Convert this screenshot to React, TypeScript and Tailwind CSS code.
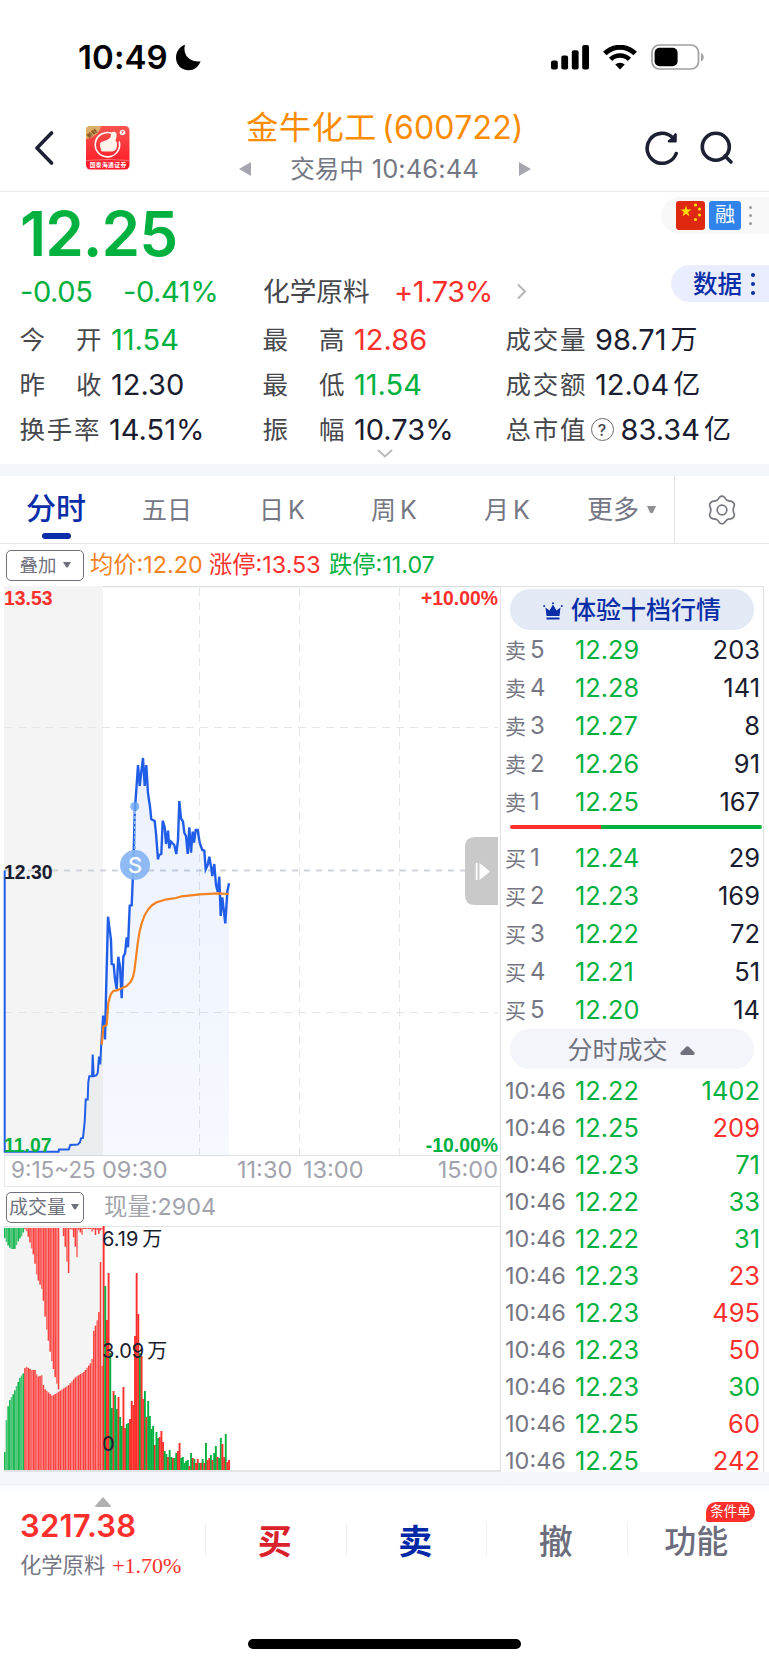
import { clsx } from 'clsx';
import type { ReactNode } from 'react';

type Tone = 'up' | 'down' | 'flat';

interface Stat {
  label: string;
  value: string;
  tone: Tone;
  hint?: boolean;
}

interface Level {
  label: string;
  price: string;
  qty: string;
}

interface Tick {
  price: string;
  qty: string;
  tone: Tone;
}

const RED = '#fb302d';
const GREEN = '#00b140';

const TONE: Record<Tone, string> = {
  up: 'text-[#fb302d]',
  down: 'text-[#00b140]',
  flat: 'text-[#1a1c30]',
};

const STATS: Stat[][] = [
  [
    { label: '今开', value: '11.54', tone: 'down' },
    { label: '最高', value: '12.86', tone: 'up' },
    { label: '成交量', value: '98.71万', tone: 'flat' },
  ],
  [
    { label: '昨收', value: '12.30', tone: 'flat' },
    { label: '最低', value: '11.54', tone: 'down' },
    { label: '成交额', value: '12.04亿', tone: 'flat' },
  ],
  [
    { label: '换手率', value: '14.51%', tone: 'flat' },
    { label: '振幅', value: '10.73%', tone: 'flat' },
    { label: '总市值', value: '83.34亿', tone: 'flat', hint: true },
  ],
];

const SELLS: Level[] = [
  { label: '5', price: '12.29', qty: '203' },
  { label: '4', price: '12.28', qty: '141' },
  { label: '3', price: '12.27', qty: '8' },
  { label: '2', price: '12.26', qty: '91' },
  { label: '1', price: '12.25', qty: '167' },
];

const BUYS: Level[] = [
  { label: '1', price: '12.24', qty: '29' },
  { label: '2', price: '12.23', qty: '169' },
  { label: '3', price: '12.22', qty: '72' },
  { label: '4', price: '12.21', qty: '51' },
  { label: '5', price: '12.20', qty: '14' },
];

const TICKS: Tick[] = [
  { price: '12.22', qty: '1402', tone: 'down' },
  { price: '12.25', qty: '209', tone: 'up' },
  { price: '12.23', qty: '71', tone: 'down' },
  { price: '12.22', qty: '33', tone: 'down' },
  { price: '12.22', qty: '31', tone: 'down' },
  { price: '12.23', qty: '23', tone: 'up' },
  { price: '12.23', qty: '495', tone: 'up' },
  { price: '12.23', qty: '50', tone: 'up' },
  { price: '12.23', qty: '30', tone: 'down' },
  { price: '12.25', qty: '60', tone: 'up' },
  { price: '12.25', qty: '242', tone: 'up' },
];

// Chart space: x 0..501, y 586..1156 for price, y 1226..1472 for volume
const AUCTION_LINE =
  '4.7,870.6 4.7,1151.8 58.7,1151.8 59,1149.4 68.7,1149.4 70.3,1145 77.7,1144.6 80,1142.3 81,1138.3 83,1137.9 84.7,1121.7 85.7,1099.6 87.7,1099.6 88.3,1082.2 89.3,1076.2 92,1076.2 92.7,1054.5 93.7,1076.2 96.3,1075.5 97.7,1073 99,1056.5 100.3,1064.4 101.3,1042.6 103,1015.7';

const TRADE_LINE =
  '103,1015.7 105,1039.5 106,995 108,916.7 111,940 111.7,964 113.7,964.7 115,979.3 116.7,989.3 118.3,956.7 120,966.7 121.7,998.3 123.3,956.7 125,953.3 126.7,937.3 128,947.3 129.7,905.7 131.7,905.3 133.3,866.7 134.7,813.3 138,765 139.7,786 141.3,771.7 143,758 144.7,786 146.3,765 148,793.3 150,806.7 151.3,819.3 154.7,821 156,833.3 158,859.3 159,855 161.3,854 162.7,820.7 164.7,827.3 166,844 168,830.7 169.3,848.3 171,841.7 174.3,845 176.3,854 178,840 179.3,801 181,818.3 183,821.7 184.3,832.7 186,836 187.7,854 189.3,827.3 191,852.7 192.7,831.7 194,842.7 195.7,830 197.7,830 199.7,842.7 202.3,850 204.3,850.7 205.7,869.3 207.7,865 209.3,856.7 211.3,868.3 212.3,876 214.3,864 216,885 217.7,891.7 219.3,876.7 220.7,916 222.3,897.3 225.3,923.3 227.3,891.7 229,883.3';

const AVG_LINE =
  '101.7,1044.6 103.3,1026.8 106.7,1024.8 108.3,1003 110.7,994.4 113.3,991 116.7,990.4 121.7,988.3 126.7,986 130.7,981.7 133,977 134.3,971 135.3,963.3 137.7,943.3 139.5,932 141.7,923.3 144.5,915.5 148.3,909.3 152,905.2 156.7,902.3 166.7,899.3 176,898 181.7,896.3 200,894.3 218.3,893.3 228.7,894';

// Height and colour of each minute's volume bar
const VOLUME =
  'r244 g184 r150 r197 g117 g62 r79 g75 g61 r73 g53 g44 r83 r42 g46 g47 r51 r69 r65 r134 r197 r156 g117 r114 r71 g79 r53 g69 g54 g41 g44 r25 g38 g32 r33 r39 r28 g19 g16 r13 g20 g13 r12 g12 g17 r19 r27 g12 g13 g7 g9 g10 r4 g17 r12 g11 r7 r11 g7 r7 g11 r7 g27 r10 r12 g15 r10 g17 g24 r13 g12 g32 r26 r13 g36 r8 r10'
    .split(' ')
    .map((s) => ({ up: s[0] === 'r', h: Number(s.slice(1)) }));

// Call auction: matched volume grows up from the base, unmatched hangs from the top
const MATCHED = [
  [4, 18], [5, 43], [6.5, 58], [8, 68], [13, 77], [19, 92], [23.5, 98], [24.5, 104], [31, 100],
  [35, 100], [36.5, 93], [41.5, 95], [43, 82], [51.5, 74], [59, 79], [68, 85], [75, 93], [83, 98],
  [90, 107], [92, 113], [92.7, 138], [96.5, 150], [98.5, 160], [99.3, 163], [99.6, 208], [101, 208],
  [101.2, 104], [103, 104],
];

const UNMATCHED = [
  [4, 10], [7, 17], [10, 21], [14, 21], [18, 12], [21, 8], [24, 1], [25.5, 2], [28.5, 12], [33, 28],
  [36.5, 50], [41.5, 62], [45, 95], [50, 128], [55, 152], [58.5, 164], [59, 0], [61.5, 0], [65, 22],
  [67, 42], [68.7, 48], [69, 1], [71, 1], [73.5, 12], [77, 34], [77.5, 1], [80, 5], [81, 9], [82, 1],
  [90, 1], [91, 5], [92, 1], [94, 2], [95, 9], [96, 1], [98, 6], [100, 2], [102, 1],
];

function sample(profile: number[][], x: number) {
  for (let i = 1; i < profile.length; i++) {
    const [x0, y0] = profile[i - 1];
    const [x1, y1] = profile[i];
    if (x <= x1) return y0 + ((y1 - y0) * (x - x0)) / (x1 - x0);
  }
  return 0;
}

const AUCTION_X = Array.from({ length: 59 }, (_, i) => 4 + i * 1.68);

function StatusBar() {
  return (
    <div className="flex h-[105px] items-center pt-[9px] pr-[64px] pl-[78px]">
      <span className="text-[33px] leading-none font-semibold tracking-[0.1px] text-black">10:49</span>
      <svg className="ml-[7px]" width="27" height="27" viewBox="0 0 27 27">
        <path d="M10 .8C7.5 9 13 19 25.6 17.2C23.5 23 19 26.2 13.6 26.2C6.5 26.2 1 20.7 1 13.7C1 8 4.6 2.6 10 .8Z" />
      </svg>
      <svg className="ml-auto" width="38" height="25" viewBox="0 0 38 25">
        <rect y="15.5" width="6.8" height="9" rx="2" />
        <rect x="10.3" y="10.5" width="6.8" height="14" rx="2" />
        <rect x="20.8" y="5.3" width="6.8" height="19.2" rx="2" />
        <rect x="31.2" y="0" width="6.8" height="24.5" rx="2" />
      </svg>
      <svg className="ml-[14px]" width="34" height="25" viewBox="0 0 34 25" fill="none" stroke="#000">
        <path d="M1.8 8.6A21.5 21.5 0 0 1 32.2 8.6" strokeWidth="5" />
        <path d="M7.6 14.3A13.4 13.4 0 0 1 26.4 14.3" strokeWidth="4.6" />
        <path d="M17 24.5L12.2 19.6A7 7 0 0 1 21.8 19.6Z" fill="#000" stroke="none" />
      </svg>
      <svg className="ml-[14px]" width="54" height="26" viewBox="0 0 54 26">
        <rect x="1" y="1" width="46.5" height="24" rx="7.5" fill="none" stroke="#a0a0a0" strokeWidth="1.7" />
        <rect x="3.6" y="3.7" width="23" height="18.6" rx="5" />
        <path d="M50 9V17.5C53.6 16 53.6 10.5 50 9Z" fill="#a0a0a0" />
      </svg>
    </div>
  );
}

function BrokerLogo() {
  return (
    <svg className="ml-[32px]" width="44" height="44" viewBox="0 0 44 44">
      <defs>
        <linearGradient id="broker" x1="0" y1="0" x2="0" y2="1">
          <stop offset="0" stopColor="#f9534c" />
          <stop offset="1" stopColor="#fd1424" />
        </linearGradient>
        <clipPath id="brokerClip">
          <rect width="43.5" height="43.5" rx="4.5" />
        </clipPath>
      </defs>
      <g clipPath="url(#brokerClip)">
        <rect width="44" height="44" fill="url(#broker)" />
        <path d="M0 0H15C14 7 7 12 0 13Z" fill="#dcae68" />
        <text x="1" y="11" fontSize="5.5" fontWeight="700" fill="#7a4a18" transform="rotate(-38 4 9)">
          新财
        </text>
        <path d="M26 7.4A12.2 12.2 0 1 0 33.2 15.5" fill="none" stroke="#fff" strokeWidth="1.6" />
        <path
          d="M15 16C18 15.500 23 13.500 24.500 11C25.300 9 24.500 6.500 27 5.800C30.500 5.300 31 8 30.500 11L29.500 14.500C31 16 31.500 18 30.800 20C31 23 29 25.500 25.500 25.500H16.500C15 25.500 14.500 24 14.800 22.500C13.600 20.500 13.700 17.500 15 16Z"
          fill="#fff3ec"
        />
        <circle cx="36.5" cy="6.5" r="2.8" fill="#fff" />
        <path d="M35.5 8L37.5 5M35.5 5.5H37.5" stroke="#f9453f" strokeWidth=".8" />
        <path d="M0 34.5Q22 32.5 44 34.5" fill="none" stroke="#ff8d85" strokeWidth=".8" />
        <text x="3.7" y="40.7" fontSize="5.8" fontWeight="700" fill="#fff" textLength="36.5">
          国泰海通证券
        </text>
      </g>
    </svg>
  );
}

function Header() {
  return (
    <div className="flex h-[87px] items-center border-b border-[#ededed] pr-[35px] pl-[34px]">
      <svg width="20" height="34" viewBox="0 0 20 34" fill="none" stroke="#1d2033" strokeWidth="3.6">
        <path d="M17.5 2L3 17L17.5 32" strokeLinecap="round" strokeLinejoin="round" />
      </svg>
      <BrokerLogo />
      <div className="flex flex-1 flex-col items-center pr-[5px] pb-1">
        <div className="flex h-[46px] items-center gap-[5px] text-[#fb8c00]">
          <span className="text-[32px] leading-none tracking-[0.7px]">金牛化工</span>
          <span className="text-[32px] leading-none tracking-[0.2px]">(600722)</span>
        </div>
        <div className="flex h-[36px] items-center text-[24.5px] leading-none text-[#757784]">
          <svg width="12" height="14" viewBox="0 0 12 14" fill="#a5a6b0">
            <path d="M12 0V14L0 7Z" />
          </svg>
          <span className="ml-[39px]">交易中</span>
          <span className="ml-[8px] text-[25.5px] tracking-[0.1px]">10:46:44</span>
          <svg className="ml-[40px]" width="12" height="14" viewBox="0 0 12 14" fill="#a5a6b0">
            <path d="M0 0V14L12 7Z" />
          </svg>
        </div>
      </div>
      <svg width="34" height="34" viewBox="0 0 34 34" fill="none" stroke="#1d2033" strokeWidth="3.6">
        <path d="M31.2 22.5A15 15 0 1 1 27.5 6.5" strokeLinecap="round" />
        <path d="M30.5 3.5V10.2H24L27 8Z" fill="#1d2033" strokeWidth="2.6" strokeLinejoin="round" />
      </svg>
      <svg className="ml-[21px]" width="34" height="34" viewBox="0 0 34 34" fill="none" stroke="#1d2033" strokeWidth="3.6">
        <circle cx="15.8" cy="15.8" r="13.5" />
        <path d="M25 25L31 31" strokeLinecap="round" />
      </svg>
    </div>
  );
}

function StatCell({ stat }: { stat: Stat }) {
  return (
    <div className="flex h-[45px] items-center leading-none">
      <span
        className={clsx(
          'flex justify-between text-[25.5px] text-[#47484d]',
          stat.label.length === 2 ? 'w-[82px]' : 'w-[80px]',
        )}
      >
        {stat.label.split('').map((ch) => (
          <span key={ch}>{ch}</span>
        ))}
      </span>
      {stat.hint && (
        <span className="ml-[5px] flex size-[23px] items-center justify-center rounded-full border-[1.5px] border-[#6a6b70] text-[16px] font-medium text-[#47484d]">
          ?
        </span>
      )}
      <span
        className={clsx(
          'flex items-center text-[29px] whitespace-nowrap',
          TONE[stat.tone],
          stat.hint ? 'ml-[7px]' : 'ml-[9.5px]',
        )}
      >
        {stat.value.replace(/[万亿]/, '')}
        <span className="ml-[4px] text-[27px]">{stat.value.match(/[万亿]/)?.[0]}</span>
      </span>
    </div>
  );
}

function Quote() {
  return (
    <div className="relative h-[272px]">
      <div className="flex h-[84px] items-center pl-[20px] text-[62px] leading-none font-semibold tracking-[-1px] text-[#00b140]">
        12.25
      </div>
      <div className="flex h-[30px] items-center pl-[20px] text-[29px] leading-none tracking-[-0.4px]">
        <span className="w-[103px] text-[#00b140]">-0.05</span>
        <span className="w-[140px] text-[#00b140]">-0.41%</span>
        <span className="w-[131px] text-[26.7px] tracking-normal text-[#47484d]">化学原料</span>
        <span className="w-[123px] text-[#fb302d]">+1.73%</span>
        <svg width="10" height="17" viewBox="0 0 10 17" fill="none" stroke="#b5b5b5" strokeWidth="2">
          <path d="M1 1.5L8 8.5L1 15.5" />
        </svg>
      </div>
      <div className="grid grid-cols-[243px_243px_1fr] pt-[11px] pl-[19.5px]">
        {STATS.flat().map((stat) => (
          <StatCell key={stat.label} stat={stat} />
        ))}
      </div>
      <svg className="mx-auto -mt-[3px]" width="16" height="9" viewBox="0 0 16 9" fill="none" stroke="#b9b9b9" strokeWidth="2">
        <path d="M1 1L8 7.5L15 1" />
      </svg>

      <div className="absolute top-[5px] right-0 flex h-[37px] w-[108px] items-center rounded-l-full bg-[#f8f8f8] pb-px pl-[15px]">
        <svg width="29" height="29" viewBox="0 0 29 29">
          <rect width="29" height="29" rx="3" fill="#de2910" />
          <path d="M10 4.5L11.3 8.6H15.5L12.1 11.1L13.4 15.2L10 12.7L6.6 15.2L7.9 11.1L4.5 8.6H8.7Z" fill="#ffde00" />
          <g fill="#ffde00">
            <circle cx="19.5" cy="4" r="1.6" />
            <circle cx="23.5" cy="8" r="1.6" />
            <circle cx="23.5" cy="14" r="1.6" />
            <circle cx="19.5" cy="18.5" r="1.6" />
          </g>
        </svg>
        <span className="ml-[4px] flex h-[29px] w-[32px] items-center justify-center rounded-[3px] bg-[#3083ea] text-[20px] text-white">
          融
        </span>
        <span className="ml-[8px] flex flex-col gap-[5px]">
          <i className="size-[3px] rounded-full bg-[#999]" />
          <i className="size-[3px] rounded-full bg-[#999]" />
          <i className="size-[3px] rounded-full bg-[#999]" />
        </span>
      </div>
      <div className="absolute top-[73px] right-0 flex h-[37px] w-[98px] items-center rounded-l-full bg-[#e9edfd] pt-[2px] pl-[22px] text-[24.5px] leading-none font-medium text-[#0a2ea8]">
        数据
        <span className="mb-[2px] ml-[9px] flex flex-col gap-[5px]">
          <i className="size-[4px] rounded-full bg-[#0a2ea8]" />
          <i className="size-[4px] rounded-full bg-[#0a2ea8]" />
          <i className="size-[4px] rounded-full bg-[#0a2ea8]" />
        </span>
      </div>
    </div>
  );
}

function Tabs() {
  return (
    <div className="flex h-[68px] items-center border-b border-[#e3e3e5] text-[25px] leading-none text-[#757784]">
      <div className="flex h-full w-[117px] flex-col items-center pt-[17px] pr-[5px]">
        <span className="text-[30px] font-medium text-[#0a2ea8]">分时</span>
        <span className="mt-[10px] h-[6px] w-[29px] rounded-full bg-[#0a2ea8]" />
      </div>
      <span className="w-[100px] pt-px text-center">五日</span>
      <span className="w-[130px] pt-px text-center">日<span className="ml-[4px]">K</span></span>
      <span className="w-[94px] pt-px text-center">周<span className="ml-[4px]">K</span></span>
      <span className="w-[132px] pt-px text-center">月<span className="ml-[4px]">K</span></span>
      <span className="ml-[14px] w-[60px] pt-px text-[26px]">更多</span>
      <svg width="9" height="8" viewBox="0 0 9 8" fill="#8f8f94">
        <path d="M0 0H9L6 6.5Q4.5 8 3 6.5Z" />
      </svg>
      <div className="ml-auto flex h-full w-[95px] items-center justify-center border-l border-[#e3e3e5]">
        <svg width="30" height="30" viewBox="0 0 30 30" fill="none" stroke="#76787f" strokeWidth="1.7">
          <path
            d="M12.4 2.3Q15 -.1 17.600 2.300C19 5.200 20.500 6.200 23.800 6.100Q27.400 7.200 27.400 10.600C25.800 13.500 25.800 16.500 27.400 19.400Q27.400 22.800 23.800 23.900C20.500 23.800 19 24.800 17.600 27.700Q15 30.100 12.400 27.700C11 24.800 9.500 23.800 6.200 23.900Q2.600 22.800 2.600 19.400C4.200 16.500 4.200 13.500 2.600 10.600Q2.600 7.200 6.200 6.100C9.500 6.200 11 5.200 12.400 2.300Z"
            strokeLinejoin="round"
          />
          <circle cx="15" cy="15" r="4.8" />
        </svg>
      </div>
    </div>
  );
}

function Dropdown({ children, className }: { children: ReactNode; className?: string }) {
  return (
    <span
      className={clsx(
        'ml-[6px] flex h-[31px] w-[78px] items-center justify-center rounded-[5px] border-[1.5px] border-[#6f717d] text-[#6f717d]',
        className,
      )}
    >
      {children}
      <svg width="8" height="6" viewBox="0 0 8 6" fill="currentColor">
        <path d="M0 0H8L5 5Q4 6 3 5Z" />
      </svg>
    </span>
  );
}

function PriceChart() {
  return (
    <svg className="block" width="501" height="570" viewBox="0 586 501 570">
      <defs>
        <linearGradient id="area" x1="0" y1="0" x2="0" y2="1">
          <stop offset="0" stopColor="#2563eb" stopOpacity=".09" />
          <stop offset="1" stopColor="#2563eb" stopOpacity=".04" />
        </linearGradient>
      </defs>
      <rect x="4" y="586" width="99" height="570" fill="#f4f4f4" />
      <path d="M103 586.5H500" stroke="#dadde0" strokeWidth="1.5" />
      <path d="M4 1155.5H500" stroke="#dfe1e5" />
      <g stroke="#e3e5e9" strokeDasharray="8 6">
        <path d="M199.5 588V1156M299.5 588V1156M399.5 588V1156" />
        <path d="M4 727.5H498M4 1012.5H498" />
      </g>
      <path d="M4 870.5H498" stroke="#cfd4da" strokeWidth="2" strokeDasharray="6 6" />

      <polygon points={`${TRADE_LINE} 229,1156 103,1156`} fill="url(#area)" />
      <polygon points={`${AUCTION_LINE} 103,1156 4.7,1156`} fill="#33408a" fillOpacity=".04" />
      <polyline points={AUCTION_LINE} fill="none" stroke="#215ee8" strokeWidth="2" />
      <polyline points={TRADE_LINE} fill="none" stroke="#215ee8" strokeWidth="2.4" />
      <polyline points={AVG_LINE} fill="none" stroke="#f58220" strokeWidth="2.2" strokeLinejoin="round" />

      {/* sell marker */}
      <path d="M135 811V850" stroke="#8ab6f2" strokeWidth="2" strokeDasharray="3 2" />
      <circle cx="134.7" cy="806.5" r="4.5" fill="#6aa6f3" fillOpacity=".8" />
      <circle cx="135" cy="865" r="15" fill="#85b4f3" fillOpacity=".92" />
      <text x="135" y="873" textAnchor="middle" fontSize="22" fontWeight="500" fill="#fff">
        S
      </text>

      <g fontFamily="'Liberation Sans', Arial, sans-serif" fontSize="19.4" fontWeight="700">
        <text x="4" y="605" fill={RED}>13.53</text>
        <text x="4" y="878.5" fill="#1a1c30">12.30</text>
        <text x="4" y="1152" fill={GREEN}>11.07</text>
        <text x="498" y="605" textAnchor="end" fill={RED}>+10.00%</text>
        <text x="498" y="1152" textAnchor="end" fill={GREEN}>-10.00%</text>
      </g>

      {/* handle that folds the order panel */}
      <path d="M498 837H475Q465 837 465 847V895Q465 905 475 905H498Z" fill="#c9c9c9" />
      <path d="M475.7 863H477.5V880H475.7ZM479.5 863L490 871.5L479.5 880Z" fill="#fff" />
    </svg>
  );
}

function VolumeChart() {
  return (
    <svg className="block" width="501" height="246" viewBox="0 1226 501 246">
      <rect x="4" y="1227" width="99" height="245" fill="#f4f4f4" />
      <path d="M4 1226.5H500" stroke="#e3e4e8" />
      <path d="M4 1471H500" stroke="#dadcdf" strokeWidth="1.5" />
      {AUCTION_X.map((x, i) => {
        const low = sample(MATCHED, x);
        const top = sample(UNMATCHED, x);
        const color = x < 24 ? GREEN : RED;
        const opacity = i % 3 === 1 ? 0.7 : 0.92;
        return (
          <g key={x} fill={color} fillOpacity={opacity}>
            <rect x={x} y={1470 - low} width="1.55" height={low} />
            {top > 0 && <rect x={x} y="1228" width="1.55" height={top} />}
          </g>
        );
      })}
      {VOLUME.map((bar, i) => (
        <rect
          key={i}
          x={102.7 + i * 1.65}
          y={1470 - bar.h}
          width="1.9"
          height={bar.h}
          fill={bar.up ? RED : GREEN}
        />
      ))}
      <g fontSize="20" fill="#1a1c30">
        <text x="102" y="1246">6.19<tspan dx="4">万</tspan></text>
        <text x="102" y="1357.5">3.09<tspan dx="3">万</tspan></text>
        <text x="102" y="1451">0</text>
      </g>
    </svg>
  );
}

function LevelRow({ side, level }: { side: string; level: Level }) {
  return (
    <div className="flex h-[38px] items-center leading-none">
      <span className="flex w-[70px] items-center gap-[4px] text-[21px] text-[#757784]">
        {side}
        <span className="text-[24px]">{level.label}</span>
      </span>
      <span className="text-[25.3px] text-[#00b140]">{level.price}</span>
      <span className="ml-auto text-[25.5px] text-[#1a1c30]">{level.qty}</span>
    </div>
  );
}

function OrderPanel() {
  return (
    <div className="h-[886px] w-[264px] border-x border-t border-[#e0e2e8] pt-[2px] pr-[3px] pl-[4px]">
      <div className="mb-px ml-[5px] flex h-[41px] w-[244px] items-center justify-center gap-[8px] rounded-full bg-[#e4e9f6] pt-[2px] text-[25px] leading-none font-medium text-[#0a2ea8]">
        <svg width="20" height="18" viewBox="0 0 20 18" fill="currentColor">
          <path d="M2.5 5.5L6.5 8.5L10 2.5L13.5 8.5L17.5 5.5L16.5 14H3.5Z" />
          <path d="M3.5 15.5H16.5V17.5H3.5Z" />
          <circle cx="1.2" cy="4" r="1" />
          <circle cx="10" cy="1.2" r="1" />
          <circle cx="18.8" cy="4" r="1" />
        </svg>
        体验十档行情
      </div>
      {SELLS.map((level) => (
        <LevelRow key={level.label} side="卖" level={level} />
      ))}
      <div className="mt-[4px] mb-[10px] ml-[5px] flex h-[4px] w-[252px] overflow-hidden rounded-full">
        <span className="w-[91px] bg-[#fb302d]" />
        <span className="flex-1 bg-[#00b140]" />
      </div>
      {BUYS.map((level) => (
        <LevelRow key={level.label} side="买" level={level} />
      ))}
      <div className="mb-[3px] ml-[5px] flex h-[40px] w-[244px] items-center justify-center gap-[12px] rounded-full bg-[#f4f5fa] pt-[2px] pr-[2px] text-[25px] leading-none text-[#6f717d]">
        分时成交
        <svg width="15" height="9" viewBox="0 0 15 9" fill="currentColor">
          <path d="M6.5 .6Q7.5 -.2 8.5 .6L14.5 6.5Q15 9 13 9H2Q0 9 .5 6.5Z" />
        </svg>
      </div>
      {TICKS.map((tick, i) => (
        <div key={i} className="flex h-[37px] items-center leading-none">
          <span className="w-[70px] text-[23.5px] text-[#757784]">10:46</span>
          <span className="text-[25.3px] text-[#00b140]">{tick.price}</span>
          <span className={clsx('ml-auto text-[25.5px]', TONE[tick.tone])}>{tick.qty}</span>
        </div>
      ))}
    </div>
  );
}

function ActionBar() {
  return (
    <div className="flex h-[181px] border-t border-[#ebedf0] bg-gradient-to-b from-[#f8faff] via-white via-5% to-white leading-none">
      <div className="flex w-[205px] flex-col pt-[12px] pl-[20px]">
        <svg className="ml-[75px]" width="16" height="10" viewBox="0 0 16 10" fill="#b0b0b0">
          <path d="M8 0L16 9Q16 10 15 10H1Q0 10 0 9Z" />
        </svg>
        <span className="mt-[3px] text-[31px] font-semibold tracking-[0.2px] text-[#fb302d]">3217.38</span>
        <span className="mt-[14px] flex items-center gap-[7px] text-[21.3px] text-[#757784]">
          化学原料
          <span className="font-[Liberation_Serif,serif] text-[22px] text-[#fb302d]">+1.70%</span>
        </span>
      </div>
      {[
        { label: '买', className: 'text-[34px] font-bold text-[#d9222a]' },
        { label: '卖', className: 'text-[34px] font-bold text-[#0027a5]' },
        { label: '撤', className: 'text-[34px] font-medium text-[#6b6d7c]' },
        { label: '功能', className: 'text-[32px] font-medium text-[#6b6d7c]' },
      ].map((item) => (
        <div
          key={item.label}
          className="relative mt-[38px] flex h-[32px] w-[140.5px] items-center justify-center border-l border-[#eef0f6]"
        >
          <span className={clsx('pt-[5px] pr-[2px] leading-none', item.className)}>{item.label}</span>
          {item.label === '功能' && (
            <span className="absolute -top-[21px] right-[12px] flex h-[20px] w-[49px] items-center justify-center rounded-[10px] rounded-bl-[2px] bg-[#fb302d] text-[13.5px] text-white">
              条件单
            </span>
          )}
        </div>
      ))}
    </div>
  );
}

export default function App() {
  return (
    <div className="relative h-[1665px] w-[769px] overflow-hidden bg-white font-[Inter,Noto_Sans_CJK_SC,sans-serif]">
      <StatusBar />
      <Header />
      <Quote />
      <div className="h-[12px] bg-[#f4f5fa]" />
      <Tabs />
      <div className="flex h-[42px] items-center text-[23.3px] leading-none whitespace-nowrap">
        <Dropdown className="mr-[6px] gap-[6px] text-[18.5px]">叠加</Dropdown>
        <span className="w-[119px] text-[#f58220]">均价:12.20</span>
        <span className="w-[120px] text-[#fb302d]">涨停:13.53</span>
        <span className="text-[#00b140]">跌停:11.07</span>
      </div>

      <div className="flex h-[886px]">
        <div className="w-[500px]">
          <PriceChart />
          <div className="ml-[4px] flex h-[31px] items-center border-b border-l border-[#e6e7ea] pb-[2px] text-[23.5px] leading-none text-[#a2a3ac]">
            <span className="ml-[6px] w-[91px] text-[22.5px]">9:15~25</span>
            <span className="w-[135px]">09:30</span>
            <span className="w-[66px]">11:30</span>
            <span>13:00</span>
            <span className="ml-auto pr-[2px]">15:00</span>
          </div>
          <div className="flex h-[39px] items-center pt-px text-[23.4px] leading-none text-[#a2a3ac]">
            <Dropdown className="mr-[20px] gap-[5px] pr-[2px] text-[19px]">成交量</Dropdown>
            现量:2904
          </div>
          <VolumeChart />
        </div>
        <OrderPanel />
      </div>

      <div className="h-[12px] bg-[#f4f5fa]" />
      <ActionBar />
      <div className="absolute bottom-[16px] left-[248px] h-[10px] w-[273px] rounded-full bg-black" />
    </div>
  );
}
